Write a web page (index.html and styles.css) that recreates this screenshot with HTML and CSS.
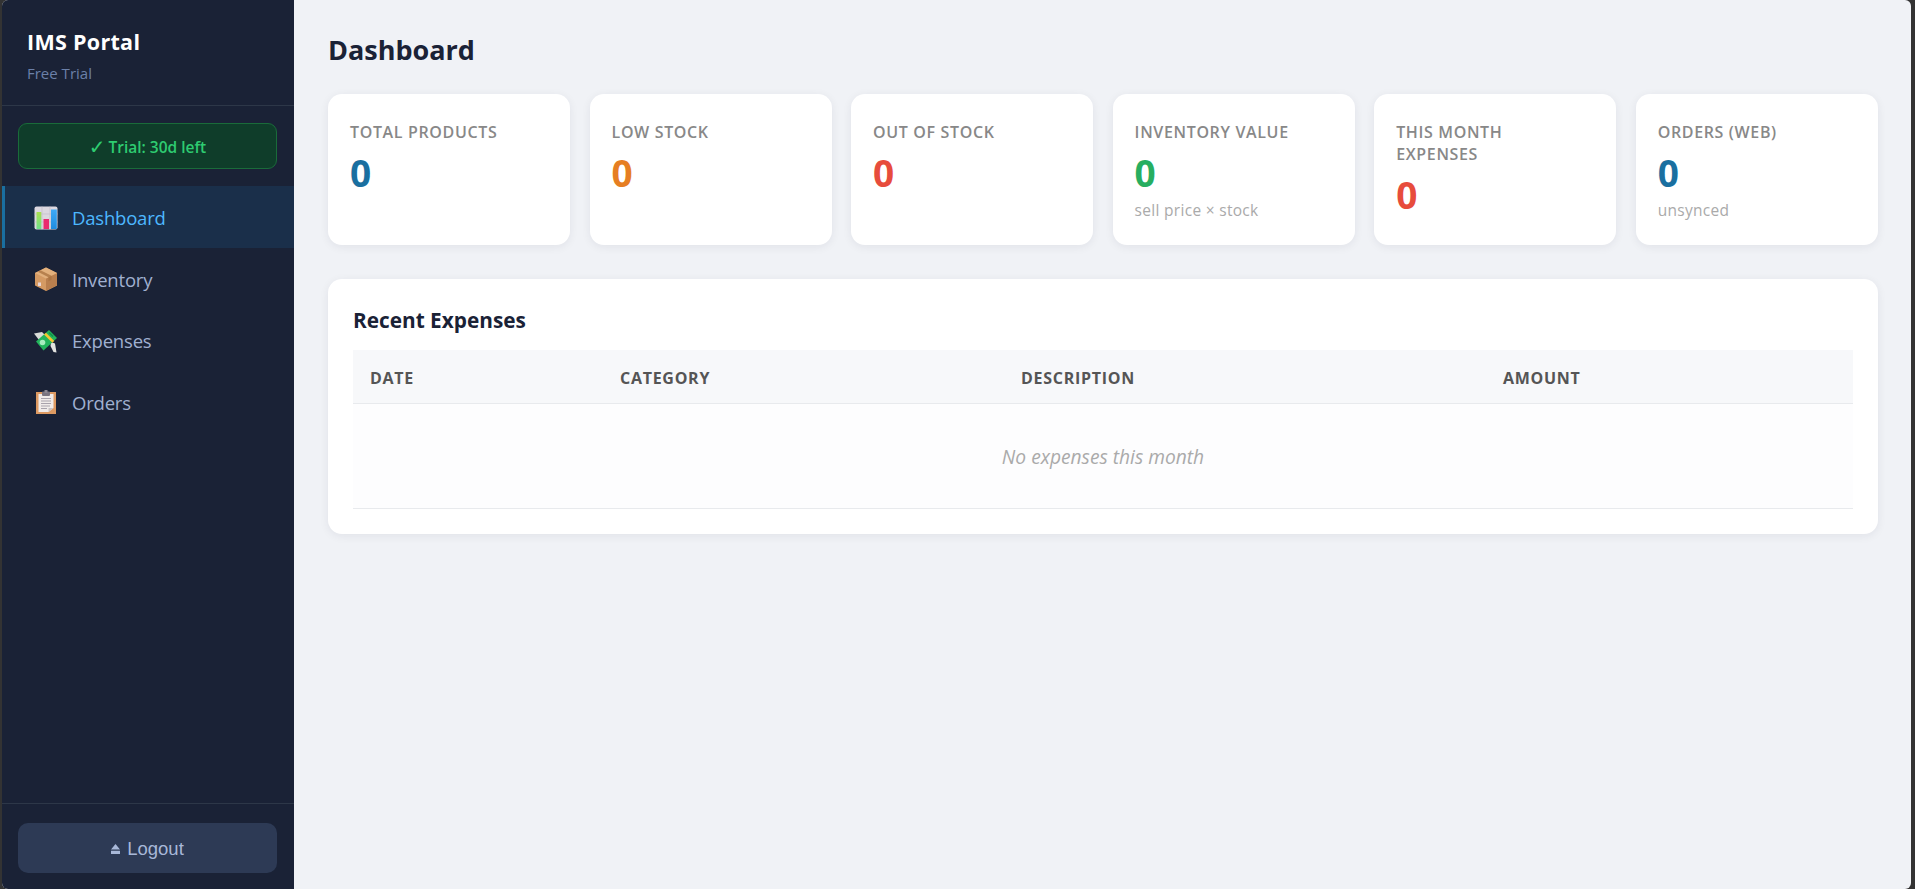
FILE: index.html
```html
<!DOCTYPE html>
<html lang="en">
<head>
<meta charset="utf-8">
<title>IMS Portal</title>
<link rel="stylesheet" href="styles.css">
</head>
<body>
<div class="app">
  <aside class="sidebar">
    <div class="brand">
      <div class="brand-name">IMS Portal</div>
      <div class="brand-plan">Free Trial</div>
    </div>
    <div class="trial-wrap"><div class="trial"><span class="check">✓</span> Trial: 30d left</div></div>
    <nav class="nav">
      <a class="nav-item active">
        <svg class="nav-icon" viewBox="0 0 24 24"><defs><linearGradient id="barG" x1="0" y1="0" x2="0" y2="1"><stop offset="0" stop-color="#a9e04f"/><stop offset="1" stop-color="#6fe08a"/></linearGradient><linearGradient id="barB" x1="0" y1="0" x2="0" y2="1"><stop offset="0" stop-color="#3fa9f5"/><stop offset="1" stop-color="#1f8de0"/></linearGradient></defs><rect x="0.5" y="0.5" width="23" height="23" rx="2" fill="#dcd8e0"/><path d="M0.5 8h23M0.5 16h23M8 .5v23M16 .5v23" stroke="#c2bfca" stroke-width=".7"/><rect x="2.500" y="6" width="4.800" height="17" fill="url(#barG)"/><rect x="9.500" y="13" width="5.500" height="10" fill="#e9296f"/><rect x="17" y="3.500" width="5.800" height="19.500" fill="url(#barB)"/></svg>
        <span class="nav-text">Dashboard</span>
      </a>
      <a class="nav-item">
        <svg class="nav-icon" viewBox="0 0 24 24"><path d="M12 .5 23 6v12.5L12 24 1 18.500V6z" fill="#d49a63"/><path d="M12 11.500 23 6v12.500L12 24z" fill="#b97f4e"/><path d="M12 .5 23 6l-11 5.500L1 6z" fill="#e2b07c"/><path d="M6.500 3.200 17.500 8.700v4l-3 1.500V10.200L3.800 4.700z" fill="#a8713f" opacity=".75"/><rect x="4" y="15.500" width="3" height="3.500" fill="#e8d5d5"/></svg>
        <span class="nav-text">Inventory</span>
      </a>
      <a class="nav-item">
        <svg class="nav-icon" viewBox="0 0 24 24"><path d="M0 4.500 8 3l3 3-6 5z" fill="#d9dcd8"/><path d="M17 13l4 1.500 1.500 9-3-.5-3-6z" fill="#e3e3e0"/><path d="M2 12.500 15 1l8 8L9.500 21.500z" fill="#22b45c"/><path d="M12 3.800 20.300 12l-2 1.800L10 5.500z" fill="#f7c531"/><circle cx="8.500" cy="13.500" r="2.800" fill="#a7eebf"/><path d="M15 3.500 19 7.500" stroke="#129046" stroke-width="1.500"/></svg>
        <span class="nav-text">Expenses</span>
      </a>
      <a class="nav-item">
        <svg class="nav-icon" viewBox="0 0 24 24"><rect x="2" y="2" width="20" height="22" fill="#dd9a62"/><path d="M4.500 4H19.500V18l-5 4H4.500z" fill="#f1ecea"/><path d="M14.500 22l5-4h-5z" fill="#c9c3c4"/><rect x="8" y="1.500" width="8" height="4.500" rx="1" fill="#7b7580"/><rect x="10.500" y="0" width="3" height="3" fill="#8d8892"/><path d="M7 8.500h10M7 11h10M7 13.500h10M7 16h9M7 18.500h6" stroke="#a9a3ac" stroke-width="1"/></svg>
        <span class="nav-text">Orders</span>
      </a>
    </nav>
    <div class="side-foot">
      <button class="logout"><svg class="eject" viewBox="0 0 10 11"><path d="M5 0 10 6H0z M0 7.500h10V11H0z" fill="#a8b8d8"/></svg><span>Logout</span></button>
    </div>
  </aside>
  <main class="main">
    <h1 class="page-title">Dashboard</h1>
    <section class="stats">
      <div class="card"><div class="label">TOTAL PRODUCTS</div><div class="value blue">0</div></div>
      <div class="card"><div class="label">LOW STOCK</div><div class="value orange">0</div></div>
      <div class="card"><div class="label">OUT OF STOCK</div><div class="value red">0</div></div>
      <div class="card"><div class="label">INVENTORY VALUE</div><div class="value green">0</div><div class="sub">sell price × stock</div></div>
      <div class="card"><div class="label">THIS MONTH EXPENSES</div><div class="value red">0</div></div>
      <div class="card"><div class="label">ORDERS (WEB)</div><div class="value blue">0</div><div class="sub">unsynced</div></div>
    </section>
    <section class="panel">
      <h2 class="panel-title">Recent Expenses</h2>
      <table class="table">
        <thead>
          <tr><th class="col-date">DATE</th><th class="col-cat">CATEGORY</th><th class="col-desc">DESCRIPTION</th><th class="col-amt">AMOUNT</th></tr>
        </thead>
        <tbody>
          <tr><td class="empty" colspan="4">No expenses this month</td></tr>
        </tbody>
      </table>
    </section>
  </main>
</div>
</body>
</html>
```

FILE: styles.css
```css
* { box-sizing: border-box; }
html, body { height: 100%; margin: 0; }
body {
  background: #333;
  font-family: "Open Sans", "Noto Sans", sans-serif;
  overflow: hidden;
}
.app {
  display: flex;
  height: 889px;
  margin-left: 2px;
  margin-right: 4px;
  background: #f0f2f6;
  border-radius: 6px;
  overflow: hidden;
}
.sidebar {
  width: 292px;
  flex: none;
  background: #1a2236;
  display: flex;
  flex-direction: column;
}
.brand {
  padding: 28px 25px 0;
  border-bottom: 1px solid #2d3748;
  box-sizing: content-box;
  height: 77px;
}
.brand-name { font-size: 21.500px; font-weight: 700; color: #fff; line-height: 28px; letter-spacing: .3px; }
.brand-plan { font-size: 15px; color: #6b80a8; line-height: 20px; margin-top: 7px; }
.trial-wrap { padding: 17px 17px 17px 16px; }
.trial {
  height: 46px;
  background: #0f3d2a;
  border: 1px solid #1a6b3a;
  border-radius: 9px;
  color: #2ecc71;
  font-size: 15.500px;
  font-weight: 600;
  display: flex;
  align-items: center;
  justify-content: center;
  gap: 3px;
  padding-top: 2px;
}
.check { font-family: "DejaVu Sans", sans-serif; font-size: 20px; font-weight: 700; line-height: 20px; }
.nav { flex: 1; display: flex; flex-direction: column; }
.nav-item {
  display: flex;
  align-items: center;
  height: 61.500px;
  padding-left: 29px;
  gap: 14px;
  color: #a0b0d0;
  font-size: 18.500px;
  letter-spacing: -.2px;
  border-left: 3px solid transparent;
}
.nav-text { margin-top: 2px; }
.nav-item.active { background: #1a2f4a; color: #4db8ff; border-left-color: #1a6fa0; }
.nav-icon { width: 24px; height: 24px; flex: none; margin-top: 2px; }
.side-foot { border-top: 1px solid #2d3748; padding: 19px 17px 16px 16px; }
.logout {
  width: 100%;
  height: 50px;
  border: 0;
  border-radius: 10px;
  background: #2d3a55;
  color: #a8b8d8;
  font-family: "Liberation Sans", Arial, sans-serif;
  font-size: 18.500px;
  display: flex;
  align-items: center;
  justify-content: center;
  gap: 7px;
  padding: 2px 0 0;
}
.eject { width: 9px; height: 10px; flex: none; }
.main { flex: 1; padding: 31px 33px 0 34px; min-width: 0; }
.page-title {
  margin: 0 0 26px;
  font-size: 27px;
  line-height: 37px;
  font-weight: 700;
  color: #1a2236;
}
.stats {
  display: grid;
  grid-template-columns: repeat(6, 1fr);
  gap: 19.200px;
  margin-bottom: 34px;
}
.card {
  background: #fff;
  border-radius: 14px;
  box-shadow: 0 2px 10px rgba(26, 34, 54, .07);
  padding: 27px 30px 0 22px;
  height: 151px;
}
.label { font-size: 16px; font-weight: 600; color: #888; line-height: 22px; letter-spacing: .65px; }
.value { font-size: 37px; font-weight: 700; line-height: 44px; margin-top: 8px; }
.blue { color: #1a6fa0; }
.orange { color: #e67e22; }
.red { color: #e74c3c; }
.green { color: #27ae60; }
.sub { font-size: 15.500px; color: #aaa; line-height: 20px; margin-top: 5px; letter-spacing: .3px; white-space: nowrap; }
.panel {
  background: #fff;
  border-radius: 14px;
  box-shadow: 0 2px 10px rgba(26, 34, 54, .07);
  padding: 23px 25px 26px;
  height: 255px;
}
.panel-title { margin: 0 0 12px; font-size: 20.800px; line-height: 36px; font-weight: 700; color: #1a2236; }
.table { width: 100%; border-collapse: collapse; table-layout: fixed; }
.table th {
  text-align: left;
  height: 53px;
  padding: 4px 17px 0;
  background: #f7f8fa;
  border-bottom: 1px solid #e8eaed;
  color: #555;
  font-size: 16px;
  font-weight: 700;
  letter-spacing: .72px;
}
.col-date { width: 250px; }
.col-cat { width: 401px; }
.col-desc { width: 482px; }
.table .empty {
  height: 105px;
  padding-top: 2px;
  text-align: center;
  font-style: italic;
  font-size: 19.200px;
  color: #aaa;
  background: #fdfdfe;
  border-bottom: 1px solid #e8eaed;
}
```
